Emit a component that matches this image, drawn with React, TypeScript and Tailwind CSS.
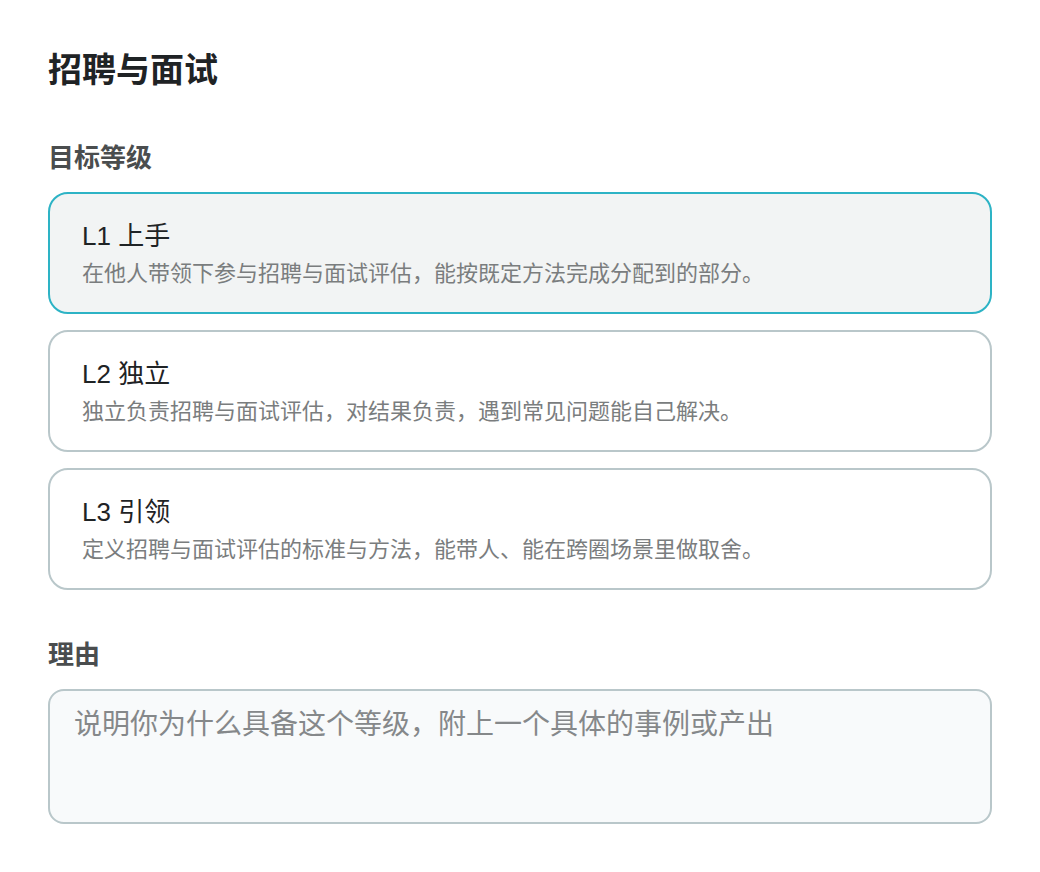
const levels = [
  { id: "L1", title: "L1 上手", desc: "在他人带领下参与招聘与面试评估，能按既定方法完成分配到的部分。" },
  { id: "L2", title: "L2 独立", desc: "独立负责招聘与面试评估，对结果负责，遇到常见问题能自己解决。" },
  { id: "L3", title: "L3 引领", desc: "定义招聘与面试评估的标准与方法，能带人、能在跨圈场景里做取舍。" },
];

const font = '"Liberation Sans", "Noto Sans CJK SC", sans-serif';

export default function App() {
  const selected = "L1";

  return (
    <div className="min-h-[872px] bg-white px-12 pt-12" style={{ fontFamily: font }}>
      <h1 className="text-[34px] leading-[44px] font-bold text-[#1f2325]">招聘与面试</h1>

      <div className="mt-12 text-[26px] leading-[36px] font-semibold text-[#4a4d4e]">目标等级</div>

      <div className="mt-4 flex flex-col gap-4">
        {levels.map((l) => {
          const active = l.id === selected;
          return (
            <button
              key={l.id}
              type="button"
              className={
                active
                  ? "flex h-[122px] flex-col justify-center gap-1 rounded-[20px] border-2 border-[#2db3c5] bg-[#f2f4f4] pl-8 pr-8 text-left"
                  : "flex h-[122px] flex-col justify-center gap-1 rounded-[20px] border-2 border-[#b9c7ca] bg-white pl-8 pr-8 text-left"
              }
            >
              <span className="text-[26px] leading-[38px] text-[#1f2325]">{l.title}</span>
              <span className="text-[22px] leading-[30px] text-[#7a7d7e]">{l.desc}</span>
            </button>
          );
        })}
      </div>

      <div className="mt-[47px] text-[26px] leading-[36px] font-semibold text-[#4a4d4e]">理由</div>

      <textarea
        className="mt-4 block h-[135px] w-full resize-none rounded-2xl border-2 border-[#b9c7ca] bg-[#f8fafb] px-6 pt-[14px] text-[28px] leading-[40px] text-[#1f2325] outline-none placeholder:text-[#85888a]"
        style={{ fontFamily: font }}
        placeholder="说明你为什么具备这个等级，附上一个具体的事例或产出"
      />
    </div>
  );
}
